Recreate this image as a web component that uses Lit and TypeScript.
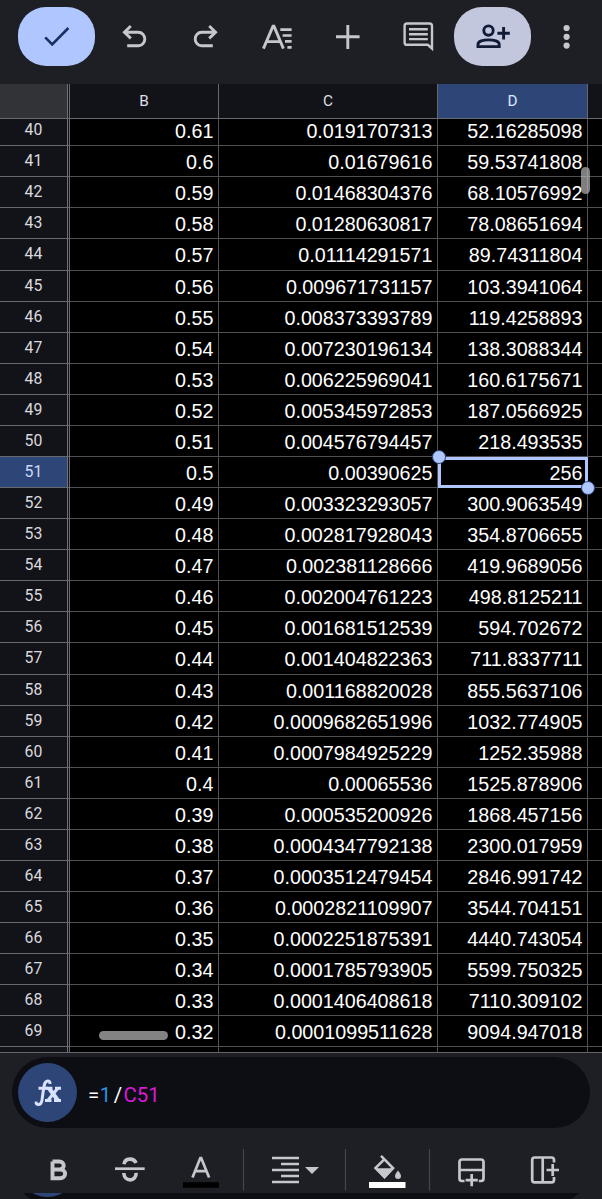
import { LitElement, html, css, svg } from "lit";
import { customElement } from "lit/decorators.js";

const FIRST_ROW = 40;
const ROWS: [string, string, string][] = [
  ["0.61", "0.0191707313", "52.16285098"],
  ["0.6", "0.01679616", "59.53741808"],
  ["0.59", "0.01468304376", "68.10576992"],
  ["0.58", "0.01280630817", "78.08651694"],
  ["0.57", "0.01114291571", "89.74311804"],
  ["0.56", "0.009671731157", "103.3941064"],
  ["0.55", "0.008373393789", "119.4258893"],
  ["0.54", "0.007230196134", "138.3088344"],
  ["0.53", "0.006225969041", "160.6175671"],
  ["0.52", "0.005345972853", "187.0566925"],
  ["0.51", "0.004576794457", "218.493535"],
  ["0.5", "0.00390625", "256"],
  ["0.49", "0.003323293057", "300.9063549"],
  ["0.48", "0.002817928043", "354.8706655"],
  ["0.47", "0.002381128666", "419.9689056"],
  ["0.46", "0.002004761223", "498.8125211"],
  ["0.45", "0.001681512539", "594.702672"],
  ["0.44", "0.001404822363", "711.8337711"],
  ["0.43", "0.001168820028", "855.5637106"],
  ["0.42", "0.0009682651996", "1032.774905"],
  ["0.41", "0.0007984925229", "1252.35988"],
  ["0.4", "0.00065536", "1525.878906"],
  ["0.39", "0.000535200926", "1868.457156"],
  ["0.38", "0.0004347792138", "2300.017959"],
  ["0.37", "0.0003512479454", "2846.991742"],
  ["0.36", "0.0002821109907", "3544.704151"],
  ["0.35", "0.0002251875391", "4440.743054"],
  ["0.34", "0.0001785793905", "5599.750325"],
  ["0.33", "0.0001406408618", "7110.309102"],
  ["0.32", "0.0001099511628", "9094.947018"],
];
const SELECTED_ROW = 51;

@customElement("sheet-toolbar")
class SheetToolbar extends LitElement {
  static styles = css`
    :host { display: block; height: 84px; background: #1e1f25; }
    .bar { display: grid; grid-template-columns: 18px 77px 79px 61px 84px 63px 72px 77px 71px; height: 73px; align-items: center; justify-items: center; }
    .pill { width: 77px; height: 59px; border-radius: 28px; display: grid; place-items: center; grid-column: 2; background: #b0c6ff; }
    .share { grid-column: 8; background: #c2c7dd; }
    .plus { margin-right: 6px; }
    svg { display: block; overflow: visible; }
  `;
  render() {
    return html`<div class="bar">
      <div class="pill">
        <svg width="28" height="22" viewBox="0 0 28 22" fill="none" stroke="#1b2f60" stroke-width="2.6"><path d="M2.2 11.3 9.2 18.3 25.4 2" /></svg>
      </div>
      <svg width="26" height="24" viewBox="0 0 26 24" fill="none" stroke="#c6c6ce" stroke-width="2.9"><path d="M8.8 1 2.4 7.2 8.8 13.4M3 7.2H16.4A6.4 6.8 0 0 1 16.4 20.8H5.2" /></svg>
      <svg width="26" height="24" viewBox="0 0 26 24" fill="none" stroke="#c6c6ce" stroke-width="2.9"><path d="M17.2 1 23.6 7.2 17.2 13.4M23 7.2H9.6A6.4 6.8 0 0 0 9.6 20.8H20.8" /></svg>
      <svg width="30" height="24" viewBox="0 0 30 24" fill="none" stroke="#c6c6ce" stroke-width="2.9"><path d="M1.4 23.6 11 1.2H12L21.4 23.6M5.4 16.6H17.6" /><path stroke-width="2.7" d="M18.3 4.7H29.6M20.6 10.5H29.6M23 16.4H29.6M25.4 22.3H29.6" /></svg>
      <svg class="plus" width="24" height="24" viewBox="0 0 24 24" stroke="#c6c6ce" stroke-width="2.9"><path d="M11.8 0V24M0 11.8H23.6" /></svg>
      <svg width="31" height="30" viewBox="0 0 31 30" fill="none" stroke="#c6c6ce" stroke-width="2.4"><path d="M4 1.5H26.5Q29 1.5 29 4V26.5L24.8 22.8H4Q1.6 22.8 1.6 20.4V4Q1.6 1.5 4 1.5Z" /><path d="M6 7.3H24.8M6 12.2H24.8M6 17.1H24.8" /></svg>
      <div class="pill share">
        <svg width="34" height="25" viewBox="0 0 34 25" fill="none" stroke="#111b35" stroke-width="2.9"><circle cx="12.5" cy="6.6" r="4.7" /><path d="M2 22.6V20.2C2 14.4 23.2 14.4 23.2 20.2V22.6ZM27.6 3V15.4M21.4 9.2H33.8" /></svg>
      </div>
      <svg width="8" height="26" viewBox="0 0 8 26" fill="#c6c6ce"><circle cx="3.6" cy="4" r="3.1" /><circle cx="3.6" cy="12.8" r="3.1" /><circle cx="3.6" cy="21.6" r="3.1" /></svg>
    </div>`;
  }
}

@customElement("sheet-grid")
class SheetGrid extends LitElement {
  static styles = css`
    :host { display: block; height: 969px; position: relative; overflow: hidden; background: #000; color: #fff; box-sizing: border-box; border-bottom: 1px solid #65666a; }
    .row { display: grid; grid-template-columns: 70px 149px 219px 150px 1fr; grid-template-rows: 100%; height: 31.08px; font: 19.72px/31px "Liberation Sans", Arial, sans-serif; }
    .row > * { box-sizing: border-box; border-right: 1px solid #505052; border-bottom: 1px solid #505052; min-height: 0; }
    .row > :last-child { border-right: 0; }
    .cell { padding-right: 4.6px; padding-top: 1px; text-align: right; white-space: nowrap; }
    .num { display: block; padding-right: 2px; background: #121318; color: #d9d9df; font: 15.8px/29px Roboto, sans-serif; text-align: center; box-shadow: inset -1px 0 #121318, inset -2px 0 #717277; border-right-color: #68696e; border-bottom-color: #68696e; }
    .active { background: linear-gradient(90deg, #2d4677 67px, #121318 67px); color: #ccdafa; }
    .head { height: 35px; }
    .head > * { background: #121318; font: 15.3px/35px Roboto, sans-serif; color: #dddde3; text-align: center; border-color: #68696e; }
    .head > .corner { background: #323336; }
    .head > .current { background: #2d4677; color: #dce5ff; }
    .first { height: 27.2px; }
    .first .num { line-height: 22px; }
    .first .cell { line-height: 25px; padding-top: 0; }
    .selected { position: relative; }
    .outline { position: absolute; inset: 0 -1px -1px 0; border: 3px solid #b0c6ff; }
    .knob { position: absolute; width: 12px; height: 12px; border-radius: 50%; background: #b0c6ff; border: 1px solid #2d4677; }
    .start { left: -6px; top: -7px; }
    .end { right: -8px; bottom: -8px; }
    .thumb { position: absolute; border-radius: 5px; }
    .vertical { left: 581px; top: 83px; width: 9px; height: 27px; background: #c0c0c0a8; }
    .horizontal { left: 99px; top: 947px; width: 69px; height: 9px; background: #838383; }
  `;
  render() {
    return html`
      <div class="row head"><div class="num corner"></div><div>B</div><div>C</div><div class="current">D</div><div></div></div>
      ${ROWS.map((r, i) => {
        const n = FIRST_ROW + i;
        const on = n === SELECTED_ROW;
        return html`<div class="row ${i === 0 ? "first" : ""}">
          <div class="num ${on ? "active" : ""}">${n}</div>
          <div class="cell">${r[0]}</div>
          <div class="cell">${r[1]}</div>
          <div class="cell ${on ? "selected" : ""}">${r[2]}${on ? html`<i class="outline"></i><i class="knob start"></i><i class="knob end"></i>` : ""}</div>
          <div></div>
        </div>`;
      })}
      <div class="row"><div class="num"></div><div></div><div></div><div></div><div></div></div>
      <div class="thumb vertical"></div>
      <div class="thumb horizontal"></div>
    `;
  }
}

@customElement("formula-bar")
class FormulaBar extends LitElement {
  static styles = css`
    :host { display: block; padding: 4px 12px 0; }
    .field { height: 71px; border-radius: 36px; background: #0d0e13; display: flex; align-items: center; padding-left: 6px; box-sizing: border-box; }
    .fx { width: 59px; height: 59px; border-radius: 50%; background: #2d4677; display: grid; place-items: center; margin-right: 11px; }
    .text { font: 20.4px/24px Roboto, sans-serif; color: #fff; white-space: nowrap; margin-top: 4px; }
    .number { color: #2f8fe0; margin: 0 2.5px 0 0.5px; }
    .ref { color: #d81bd8; margin-left: 1.5px; }
  `;
  render() {
    return html`<div class="field">
      <div class="fx">
        <svg width="28" height="28" viewBox="0 0 28 28" fill="none" stroke="#d9e2ff" stroke-width="3">
          <path d="M16 5Q16.2 1.8 13.6 1.9C10.8 2.1 10.2 5 9.4 11L8 21Q7.2 25.8 4 25.6 1.8 25.4 2.2 22.6M4.5 9.3H14" />
          <path d="M12.2 9.3H18.4M21 9.3H27M11 21.5H17.5M20 21.5H27" /><path stroke-width="4.2" d="M15.2 9.4 23.8 21.2" /><path d="M23.6 9.5 14.2 21" />
        </svg>
      </div>
      <div class="text">=<span class="number">1</span>/<span class="ref">C51</span></div>
    </div>`;
  }
}

@customElement("format-bar")
class FormatBar extends LitElement {
  static styles = css`
    :host { display: block; height: 65px; }
    svg { display: block; }
  `;
  render() {
    const c = "#c6c6ce";
    return html`<svg width="602" height="65" viewBox="0 1128 602 65" fill="none" stroke=${c} stroke-width="2.7">
      ${svg`
      <path stroke-width="3.9" d="M52.5 1161.5V1178.2H60C66.8 1178.2 66.8 1169.5 60 1169.5H52.5M52.5 1161.5H59.3C65.2 1161.5 65.2 1169.5 59.3 1169.5" />
      <path d="M115 1168.7H144.7" /><path stroke-width="3.6" d="M124 1164.2C125 1157.6 133.8 1157.6 136 1163M123.8 1173C124.2 1182.4 136.6 1182 136.1 1172.8" />
      <path d="M192.5 1177.5 200.3 1158H201.2L209.1 1177.5M195.5 1171.2H206" />
      <path stroke="#000" stroke-width="5.5" d="M183 1185H219" />
      <path stroke="#44464c" stroke-width="1.2" d="M243.5 1149V1190.5M345.5 1149V1190.5M429.5 1149V1190.5" />
      <path d="M272 1158H299M281 1164H299M272 1170H299M281 1176H299M272 1182H299" />
      <path fill=${c} stroke="none" d="M305 1167H319L312 1174Z" />
      <path stroke-width="2.6" d="M381 1155.8 393 1168 384.5 1177 375.5 1168 383.8 1159.8" />
      <path fill=${c} stroke="none" d="M374.5 1168.2H394.5L384.5 1179ZM398 1170.5Q401 1174.4 401 1176A3 3 0 0 1 395 1176Q395 1174.4 398 1170.5Z" />
      <path stroke="#fff" stroke-width="6" d="M369 1185H405.5" />
      <path d="M464.5 1181H462Q459.5 1181 459.5 1178.5V1162Q459.5 1159.5 462 1159.5H481Q483.5 1159.5 483.5 1162V1178.5Q483.5 1181 481 1181H478.8M459.5 1170H483.5M471.7 1174V1186.2M465.6 1180.2H477.8" />
      <path d="M554 1162.5V1160Q554 1157.5 551.5 1157.5H534.5Q532.2 1157.5 532.2 1160V1180Q532.2 1182.3 534.5 1182.3H551.5Q554 1182.3 554 1180V1177M542.7 1157.5V1182.3M546.5 1170H559M552.7 1164V1176" />
      `}
    </svg>`;
  }
}

@customElement("app-root")
class AppRoot extends LitElement {
  static styles = css`
    :host { display: flex; flex-direction: column; width: 602px; height: 1199px; overflow: hidden; background: #1e1f25; }
    .peek { height: 6px; padding: 0 12px; overflow: hidden; display: flex; align-items: flex-end; }
    .shell { flex: 1; height: 71px; margin-bottom: -4px; border-radius: 36px; background: #0d0e13; display: flex; align-items: center; padding-left: 6px; }
    .dot { width: 59px; height: 59px; border-radius: 50%; background: #2d4677; }
  `;
  render() {
    return html`
      <sheet-toolbar></sheet-toolbar>
      <sheet-grid></sheet-grid>
      <formula-bar></formula-bar>
      <format-bar></format-bar>
      <div class="peek"><div class="shell"><div class="dot"></div></div></div>
    `;
  }
}
